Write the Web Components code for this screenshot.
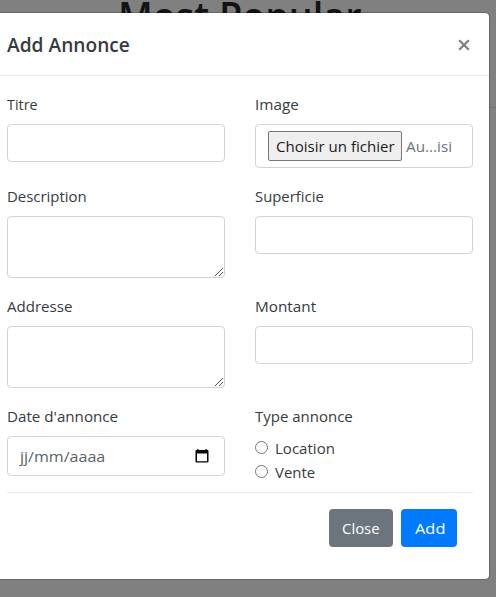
<!DOCTYPE html>
<html lang="fr"><head><meta charset="utf-8"><title>Add Annonce</title>
<style>
html,body{margin:0;height:100%;overflow:hidden}
body{background:#808080;color:#363b40;font:15.3px/24px "Open Sans","Noto Sans",sans-serif}
</style></head><body>
<annonce-page></annonce-page>
<script>
const define=(name,html,init)=>customElements.define(name,class extends HTMLElement{
  connectedCallback(){
    if(this.shadowRoot)return;
    this.attachShadow({mode:'open'}).innerHTML=html;
    if(init)init(this,this.shadowRoot);
  }
});

/* A single line of text condensed or widened to the width in its "w" attribute. */
define('text-run',`<style>:host{display:block;white-space:nowrap;height:1lh}
span{display:inline-block;transform-origin:0 0}</style><span><slot></slot></span>`,(el,root)=>{
  const w=+el.getAttribute('w'),s=root.querySelector('span');
  el.style.width=w+'px';
  s.style.transform=`scaleX(${w/s.offsetWidth})`;
});

define('form-field',`<style>:host{display:block}label{display:block;height:24px;margin-bottom:8px}</style>
<label><slot name="label"></slot></label><slot></slot>`);

define('text-input',`<style>:host{display:block}
input{display:block;box-sizing:border-box;width:100%;height:38px;border:1px solid #ced4da;border-radius:4px;background:#fff;outline:0}</style><input type="text">`);

define('text-block',`<style>:host{display:block}
div{box-sizing:border-box;height:62px;border:1px solid #ced4da;border-radius:4px;display:flex;justify-content:flex-end;align-items:flex-end}
svg{display:block}</style>
<div><svg width="9" height="9" viewBox="0 0 9 9" shape-rendering="crispEdges" fill="#555"><path d="M0 7h1v1H0zM1 6h1v1H1zM2 5h1v1H2zM3 4h1v1H3zM4 3h1v1H4zM5 2h1v1H5zM6 1h1v1H6zM7 0h1v1H7zM4 7h1v1H4zM5 6h1v1H5zM6 5h1v1H6zM7 4h1v1H7z"/></svg></div>`);

define('file-input',`<style>:host{display:flex;box-sizing:border-box;height:44px;border:1px solid #ced4da;border-radius:4px;padding:6px 12px;gap:4px;color:#6c757d}
button{box-sizing:border-box;width:134px;height:30px;margin:0;padding:2px 7px;border:1px solid #767676;border-radius:2px;background:#efefef;color:#1c1c1c;font:inherit;text-align:left}
.name{padding-top:3px}</style>
<button><text-run w="119">Choisir un fichier</text-run></button><text-run class="name" w="46">Au...isi</text-run>`);

define('date-input',`<style>:host{display:flex;box-sizing:border-box;height:40px;border:1px solid #ced4da;border-radius:4px;padding:7px 14px 7px 12px;justify-content:space-between;color:#5a6168}
svg{display:block;margin-top:4px}</style>
<text-run w="85">jj/mm/aaaa</text-run>
<svg width="16" height="16" viewBox="0 0 16 16"><path fill="#000" fill-rule="evenodd" d="M3.2 1h1.3v1h7V1h1.3v1h.7q1 0 1 1v10.5q0 1-1 1H2.5q-1 0-1-1V3q0-1 1-1h.7zM3 5.5v7.7h10V5.5z"/></svg>`);

define('radio-option',`<style>:host{display:flex;height:24px;gap:7px}
i{box-sizing:border-box;width:13px;height:13px;margin-top:5px;border:1px solid #767676;border-radius:50%;background:#fff}</style><i></i><slot></slot>`);

define('action-button',`<style>:host{display:block}
button{display:block;box-sizing:border-box;height:38px;margin:0;padding:7px 13px;border:0;border-radius:4px;background:var(--fill);color:#fff;font:inherit}</style><button><slot></slot></button>`);

define('modal-dialog',`<style>
:host{display:block;box-sizing:border-box;width:500px;height:568px;background:#fff;background-clip:padding-box;border:1px solid rgba(0,0,0,.2);border-radius:5px}
header{box-sizing:border-box;height:63px;border-bottom:1px solid #e9ecef;padding:17px 19px 0 16px;display:flex;justify-content:space-between;font-size:19px;line-height:30px;font-weight:550}
svg{display:block;margin-top:9px}
.body{padding:16px}
footer{border-top:1px solid #e9ecef;padding:16px;display:flex;justify-content:flex-end;gap:8px}
</style><header><slot name="title"></slot><svg width="12" height="12" viewBox="0 0 12 12"><path d="M1.2 1.2l9.6 9.6M10.8 1.2l-9.6 9.6" stroke="#808080" stroke-width="2.3"/></svg></header>
<div class="body"><slot></slot><footer><slot name="footer"></slot></footer></div>`);

define('annonce-page',`<style>
:host{display:block;position:relative;height:597px;overflow:hidden}
h1{margin:0;padding:0 0 0 118px;height:108px;border-bottom:1px solid #707070;font-size:39px;line-height:32px;font-weight:600;color:#111315;box-sizing:border-box}
modal-dialog{position:absolute;left:-10px;top:12px}
.grid{display:grid;grid-template:92px 110px 110px 88px / 218px 218px;column-gap:30px}
</style>
<h1><text-run w="243">Most Popular</text-run></h1>
<modal-dialog>
<text-run slot="title" w="123">Add Annonce</text-run>
<div class="grid">
<form-field><text-run slot="label" w="31">Titre</text-run><text-input></text-input></form-field>
<form-field><text-run slot="label" w="44">Image</text-run><file-input></file-input></form-field>
<form-field><text-run slot="label" w="80">Description</text-run><text-block></text-block></form-field>
<form-field><text-run slot="label" w="69">Superficie</text-run><text-input></text-input></form-field>
<form-field><text-run slot="label" w="65">Addresse</text-run><text-block></text-block></form-field>
<form-field><text-run slot="label" w="61">Montant</text-run><text-input></text-input></form-field>
<form-field><text-run slot="label" w="111">Date d'annonce</text-run><date-input></date-input></form-field>
<form-field><text-run slot="label" w="98">Type annonce</text-run>
<radio-option><text-run w="60">Location</text-run></radio-option><radio-option><text-run w="40">Vente</text-run></radio-option></form-field>
</div>
<action-button slot="footer" style="--fill:#6c757d"><text-run w="38">Close</text-run></action-button>
<action-button slot="footer" style="--fill:#007bff"><text-run w="30">Add</text-run></action-button>
</modal-dialog>`);
</script></body></html>
